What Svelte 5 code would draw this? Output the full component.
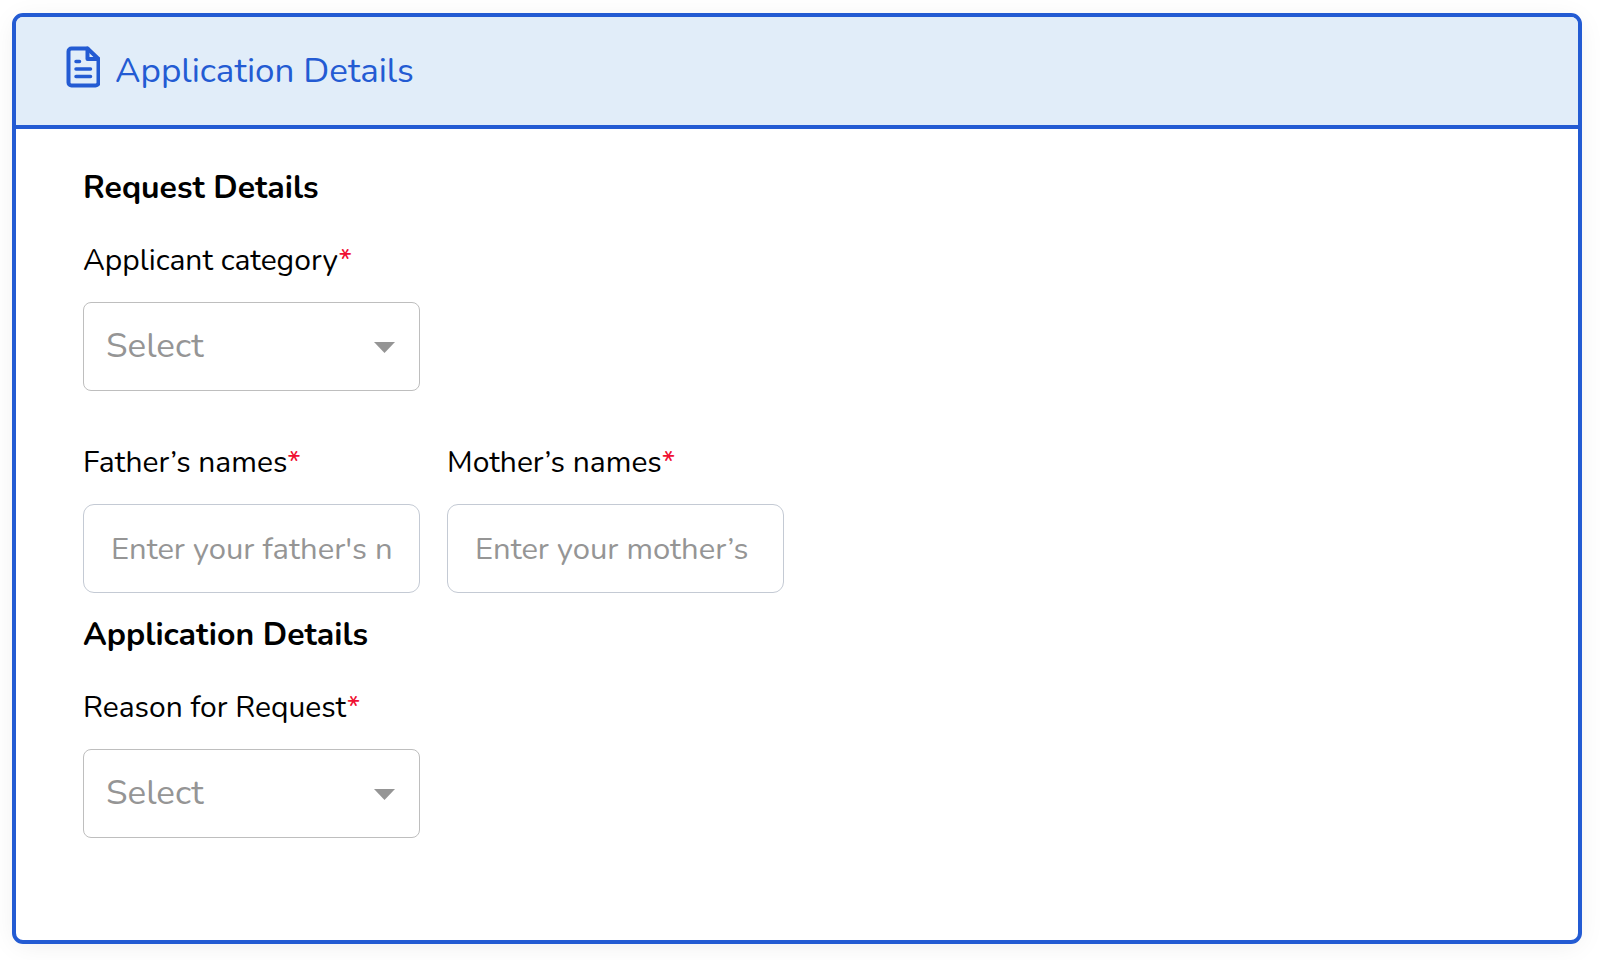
<script lang="ts">
	let category = $state('');
	let reason = $state('');
	let fatherNames = $state('');
	let motherNames = $state('');
</script>

{#snippet label(id: string, text: string)}
	<label for={id}>{text}<span class="required">*</span></label>
{/snippet}

{#snippet arrow()}
	<svg class="arrow" viewBox="0 0 21 13" width="21" height="13" aria-hidden="true">
		<path d="M0 2h21L10.500 13z" fill="#959595" />
	</svg>
{/snippet}

<section class="card">
	<header>
		<svg class="icon" viewBox="0 0 34 42" width="34" height="42" fill="none" stroke="#235bd3" stroke-width="4" stroke-linecap="round" stroke-linejoin="round" aria-hidden="true">
			<path d="M21.500 2.500H5.500a3 3 0 0 0-3 3v31a3 3 0 0 0 3 3h24a3 3 0 0 0 3-3V13z" />
			<path d="M21.500 2.500V13H32" />
			<path d="M10 15.500h3.500M10 23h14.500M10 30.500h14.500" stroke-width="3.500" />
		</svg>
		<h1>Application Details</h1>
	</header>
	<form>
		<h2>Request Details</h2>
		<div class="row">
			<div class="field">
				{@render label('category', 'Applicant category')}
				<div class="select">
					<select id="category" bind:value={category}>
						<option value="">Select</option>
					</select>
					{@render arrow()}
				</div>
			</div>
		</div>
		<div class="row names">
			<div class="field">
				{@render label('father', 'Father’s names')}
				<input id="father" type="text" placeholder="Enter your father's names" bind:value={fatherNames} />
			</div>
			<div class="field">
				{@render label('mother', 'Mother’s names')}
				<input id="mother" type="text" placeholder="Enter your mother’s names" bind:value={motherNames} />
			</div>
		</div>
		<h2>Application Details</h2>
		<div class="row">
			<div class="field">
				{@render label('reason', 'Reason for Request')}
				<div class="select">
					<select id="reason" bind:value={reason}>
						<option value="">Select</option>
					</select>
					{@render arrow()}
				</div>
			</div>
		</div>
	</form>
</section>

<style>
	:global(body) {
		background: #fff;
	}

	.card {
		margin: 13px 18px 16px 12px;
		border: 4px solid #235bd3;
		border-radius: 11px;
		box-shadow: 0 4px 28px -4px rgba(0, 0, 0, 0.08);
		font-family: Nunito, Lato, sans-serif;
		color: #000;
	}

	header {
		display: flex;
		align-items: center;
		gap: 15px;
		height: 108px;
		padding: 0 50px;
		border-bottom: 4px solid #235bd3;
		border-radius: 7px 7px 0 0;
		background: #e1edf9;
	}

	.icon {
		margin-bottom: 8px;
	}

	h1 {
		margin: 0;
		font-size: 35px;
		font-weight: 400;
		line-height: 44px;
		color: #235bd3;
	}

	form {
		padding: 39px 67px 102px;
	}

	h2 {
		margin: 0 0 33px;
		font-size: 32px;
		font-weight: 700;
		line-height: 40px;
	}

	.row {
		display: flex;
		flex-wrap: wrap;
		gap: 27px;
	}

	.names {
		margin: 52px 0 22px;
	}

	.field {
		display: flex;
		flex-direction: column;
		gap: 21px;
		width: 337px;
	}

	label {
		font-size: 30px;
		line-height: 40px;
	}

	.required {
		color: #f00f32;
	}

	.select {
		display: grid;
		align-items: center;
	}

	.select > :global(*) {
		grid-area: 1 / 1;
	}

	select,
	input {
		box-sizing: border-box;
		width: 100%;
		height: 89px;
		margin: 0;
		border: 1px solid #bebebe;
		background: #fff;
		font-family: inherit;
	}

	select {
		appearance: none;
		padding: 0 50px 2px 22px;
		border-radius: 8px;
		font-size: 35px;
		color: #959595;
	}

	input {
		padding: 0 27px;
		border-color: #c4cad4;
		border-radius: 11px;
		font-size: 31px;
	}

	input::placeholder {
		color: #959595;
		opacity: 1;
	}

	.arrow {
		justify-self: end;
		margin-right: 25px;
		pointer-events: none;
	}
</style>
